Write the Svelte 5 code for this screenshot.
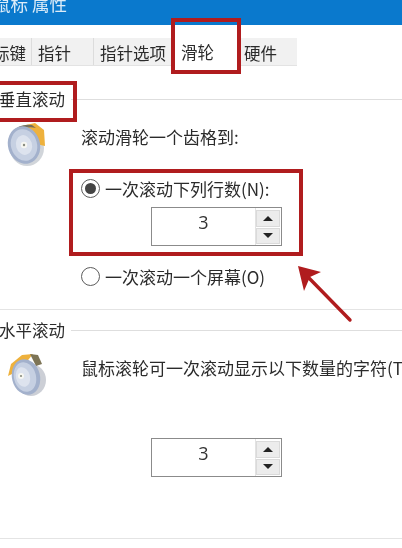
<script>
	const tabs = [
		{ label: '标键', width: 32 },
		{ label: '指针', width: 62 },
		{ label: '指针选项', width: 79 },
		{ label: '滑轮', width: 68, active: true },
		{ label: '硬件', width: 56 }
	];
</script>

{#snippet spinner()}
	<div class="spinner">
		<span class="value">3</span>
		<div class="arrows">
			<button class="step" aria-label="up"><i class="tri up"></i></button>
			<button class="step" aria-label="down"><i class="tri down"></i></button>
		</div>
	</div>
{/snippet}

<div class="page">
	<header class="title">鼠标 属性</header>

	<nav class="tabs">
		{#each tabs as tab}
			<div class="tab" class:active={tab.active} style="width: {tab.width}px">{tab.label}</div>
		{/each}
	</nav>

	<section class="group first">
		<div class="legend"><span>垂直滚动</span></div>
		<div class="body">
			<svg class="wheel" viewBox="0 0 40 46" aria-hidden="true">
				<ellipse cx="21" cy="26" rx="17" ry="18" fill="#8d95a3" opacity="0.4" />
				<path d="M20 3 L29 1 L38 8 L39 24 L30 22 Z" fill="#eeb13c" />
				<path d="M6 10 Q14 1 26 3 L30 6 Q18 3 9 12 Z" fill="#76705c" />
				<ellipse cx="18" cy="23" rx="16" ry="19" transform="rotate(-16 18 23)" fill="#a3b1cc" />
				<ellipse cx="18" cy="23" rx="13" ry="16" transform="rotate(-16 18 23)" fill="#c6d0e2" />
				<ellipse cx="18" cy="23" rx="8" ry="10" transform="rotate(-16 18 23)" fill="#dde3ee" />
				<circle cx="18" cy="23" r="3.2" fill="#f7f7f2" />
				<circle cx="18" cy="23" r="1.2" fill="#8a8d80" />
			</svg>
			<div class="content">
				<p class="hint">滚动滑轮一个齿格到:</p>
				<div class="option checked">
					<span class="radio"></span>一次滚动下列行数(N):
				</div>
				<div class="spin-row">{@render spinner()}</div>
				<div class="option second">
					<span class="radio"></span>一次滚动一个屏幕(O)
				</div>
			</div>
		</div>
	</section>

	<hr class="rule" />

	<section class="group">
		<div class="legend"><span>水平滚动</span></div>
		<div class="body">
			<svg class="wheel flat" viewBox="0 0 40 46" aria-hidden="true">
				<ellipse cx="25" cy="28" rx="15" ry="16" fill="#8d95a3" opacity="0.45" />
				<path d="M2 24 L5 12 L16 3 L27 2 L14 18 Z" fill="#eeb13c" />
				<path d="M24 2 L32 3 L36 12 L30 14 Z" fill="#7d7456" />
				<ellipse cx="20" cy="25" rx="14" ry="18" transform="rotate(-14 20 25)" fill="#a3b1cc" />
				<ellipse cx="19" cy="25" rx="11" ry="15" transform="rotate(-14 19 25)" fill="#c6d0e2" />
				<ellipse cx="17" cy="25" rx="7" ry="10" transform="rotate(-14 17 25)" fill="#dde3ee" />
				<circle cx="15" cy="24" r="3" fill="#f7f7f2" />
				<circle cx="15" cy="24" r="1.1" fill="#8a8d80" />
			</svg>
			<div class="content">
				<p class="hint nowrap">鼠标滚轮可一次滚动显示以下数量的字符(T</p>
				<div class="spin-row lower">{@render spinner()}</div>
			</div>
		</div>
	</section>

	<hr class="rule bottom" />

	<!-- annotations drawn on top of the dialog -->
	<div class="mark mark-tab"></div>
	<div class="mark mark-legend"></div>
	<div class="mark mark-option"></div>
	<svg class="arrow" viewBox="0 0 60 64" aria-hidden="true">
		<path d="M53 56 L11 13" stroke="#b01c1e" stroke-width="3.4" stroke-linecap="round" fill="none" />
		<path d="M1 2 L24 8 L13 13 L7 27 Z" fill="#b01c1e" />
	</svg>
</div>

<style>
	:global(body) {
		background: #fff;
	}

	.page {
		position: relative;
		width: 402px;
		height: 548px;
		overflow: hidden;
		background: #fff;
		color: #2b2b2b;
		font-family: "Noto Sans CJK SC", "Liberation Sans", sans-serif;
		font-size: 16.5px;
		filter: blur(0.35px);
	}

	.title {
		height: 25px;
		margin-bottom: 13px;
		background: #0a79cd;
		color: #dcecf8;
		font-size: 17.5px;
		line-height: 8px;
		text-indent: -7px;
		white-space: nowrap;
	}

	.tabs {
		display: flex;
		width: 297px;
		height: 28px;
		background: #f1f1f1;
		border-bottom: 1px solid #e3e3e3;
		box-sizing: border-box;
	}

	.tab {
		box-sizing: border-box;
		padding-left: 6px;
		border-right: 1px solid #dcdcdc;
		line-height: 30px;
		white-space: nowrap;
	}

	.tab:first-child {
		padding-left: 0;
		text-indent: -7px;
	}

	.tab.active {
		height: 30px;
		background: #fff;
		border-right: 0;
		line-height: 28px;
		padding-left: 8px;
	}

	.tab:last-child {
		padding-left: 3px;
		border-right: 0;
	}

	.group.first {
		padding-top: 23px;
	}

	.legend {
		display: flex;
		align-items: center;
		gap: 6px;
		height: 20px;
		margin-left: -1px;
		white-space: nowrap;
	}

	.legend::after {
		content: "";
		flex: 1;
		height: 1px;
		background: #dedede;
	}

	.body {
		display: flex;
		align-items: flex-start;
	}

	.wheel {
		flex: none;
		width: 40px;
		height: 46px;
		margin: 13px 0 0 6px;
	}

	.wheel.flat {
		margin-top: 12px;
	}

	.content {
		min-width: 0;
		flex: 1;
		margin-left: 35px;
		font-size: 17px;
	}

	.hint {
		margin: 16px 0 0;
		line-height: 24px;
		white-space: nowrap;
	}

	.hint.nowrap {
		margin-top: 16px;
	}

	.option {
		display: flex;
		align-items: center;
		gap: 5px;
		height: 24px;
		margin: 27px 0 0;
		white-space: nowrap;
	}

	.option.second {
		margin-top: 18px;
	}

	.radio {
		position: relative;
		flex: none;
		box-sizing: border-box;
		width: 19px;
		height: 19px;
		border: 1px solid #5c5c5c;
		border-radius: 50%;
		background: #fff;
	}

	.checked .radio::after {
		content: "";
		position: absolute;
		inset: 3px;
		border-radius: 50%;
		background: #444;
	}

	.spin-row {
		margin: 7px 0 0 70px;
	}

	.spin-row.lower {
		margin-top: 58px;
	}

	.spinner {
		display: flex;
		box-sizing: border-box;
		width: 131px;
		height: 39px;
		border: 1px solid #8b8b8b;
		background: #fff;
	}

	.value {
		flex: 1;
		text-align: center;
		font-family: "Open Sans", "Liberation Sans", sans-serif;
		font-size: 18px;
		line-height: 28px;
		color: #333;
	}

	.arrows {
		display: flex;
		flex-direction: column;
		gap: 1px;
		width: 24px;
		padding: 2px 1px 1px 0;
		border-left: 1px solid #e2e2e2;
	}

	.step {
		flex: 1;
		display: flex;
		align-items: center;
		justify-content: center;
		padding: 0;
		border: 1px solid #dadada;
		border-radius: 0;
		background: #ececec;
	}

	.tri {
		width: 0;
		height: 0;
		border-left: 5px solid transparent;
		border-right: 5px solid transparent;
	}

	.tri.up {
		border-bottom: 5px solid #222;
	}

	.tri.down {
		border-top: 5px solid #222;
	}

	.rule {
		height: 1px;
		margin: 21px 0 10px;
		border: 0;
		background: #e4e4e4;
	}

	.rule.bottom {
		position: absolute;
		left: 0;
		right: 0;
		top: 538px;
		margin: 0;
	}

	.mark {
		position: absolute;
		box-sizing: border-box;
		border: 4px solid #b01c1e;
	}

	.mark-tab {
		left: 171px;
		top: 18px;
		width: 70px;
		height: 56px;
	}

	.mark-legend {
		left: -6px;
		top: 81px;
		width: 83px;
		height: 41px;
	}

	.mark-option {
		left: 69px;
		top: 169px;
		width: 234px;
		height: 87px;
	}

	.arrow {
		position: absolute;
		left: 297px;
		top: 264px;
		width: 60px;
		height: 64px;
	}
</style>
